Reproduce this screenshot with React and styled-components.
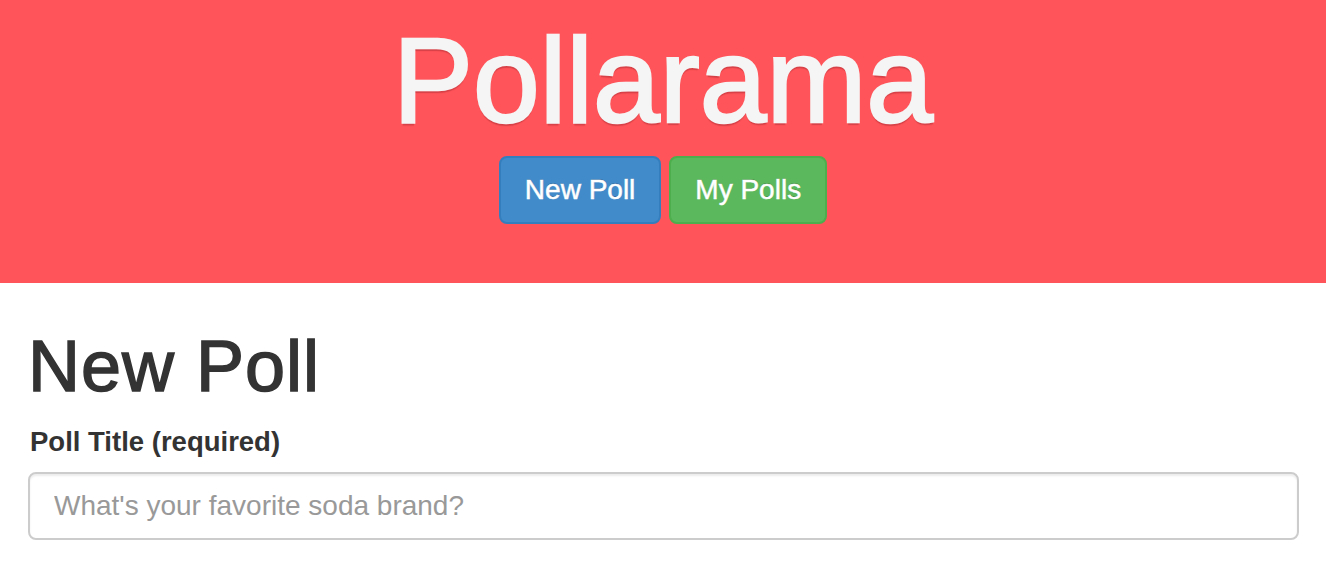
import React from "react";
import styled, { createGlobalStyle } from "styled-components";

const GlobalStyle = createGlobalStyle`
  html, body {
    margin: 0;
    padding: 0;
    background: #ffffff;
    font-family: "Liberation Sans", Arial, Helvetica, sans-serif;
    color: #333333;
  }
  * {
    box-sizing: border-box;
  }
`;

const Header = styled.header`
  background: #ff5459;
  padding: 14px 0 59px;
  text-align: center;
`;

const Brand = styled.h1`
  margin: 0 0 10px;
  font-size: 120px;
  line-height: 132px;
  font-weight: normal;
  color: #f5f5f5;
  -webkit-text-stroke: 2.5px #f5f5f5;
  text-shadow: 0 3px 1px rgba(120, 20, 30, 0.3);
`;

const Nav = styled.nav`
  display: flex;
  justify-content: center;
  gap: 8px;
`;

const NavButton = styled.button`
  font-family: inherit;
  font-size: 28px;
  line-height: 40px;
  padding: 12px 24px;
  border-radius: 8px;
  border: 2px solid ${({ $variant }) => ($variant === "primary" ? "#357ebd" : "#4cae4c")};
  background: ${({ $variant }) => ($variant === "primary" ? "#428bca" : "#5cb85c")};
  color: #ffffff;
  -webkit-text-stroke: 0.5px #ffffff;
  text-shadow: 0 -1px 0 rgba(0, 0, 0, 0.2);
  cursor: pointer;
`;

const Main = styled.main`
  padding: 0 27px 0 28px;
`;

const Title = styled.h2`
  margin: 44px 0 16px;
  font-size: 72px;
  line-height: 79px;
  font-weight: normal;
  letter-spacing: 1px;
  color: #333333;
  -webkit-text-stroke: 1.5px #333333;
`;

const Field = styled.div`
  display: flex;
  flex-direction: column;
`;

const Label = styled.label`
  font-size: 27.5px;
  line-height: 40px;
  font-weight: bold;
  color: #333333;
  margin: 0 0 10px 2px;
`;

const Input = styled.input`
  height: 68px;
  width: 100%;
  padding: 12px 24px;
  font-family: inherit;
  font-size: 28px;
  color: #555555;
  background: #ffffff;
  border: 2px solid #cccccc;
  border-radius: 8px;
  box-shadow: inset 0 2px 2px rgba(0, 0, 0, 0.075);
  outline: none;
  &::placeholder {
    color: #999999;
  }
`;

export default function App() {
  return (
    <>
      <GlobalStyle />
      <Header>
        <Brand>Pollarama</Brand>
        <Nav>
          <NavButton $variant="primary">New Poll</NavButton>
          <NavButton $variant="success">My Polls</NavButton>
        </Nav>
      </Header>
      <Main>
        <Title>New Poll</Title>
        <Field>
          <Label htmlFor="title">Poll Title (required)</Label>
          <Input id="title" type="text" placeholder="What's your favorite soda brand?" />
        </Field>
      </Main>
    </>
  );
}
